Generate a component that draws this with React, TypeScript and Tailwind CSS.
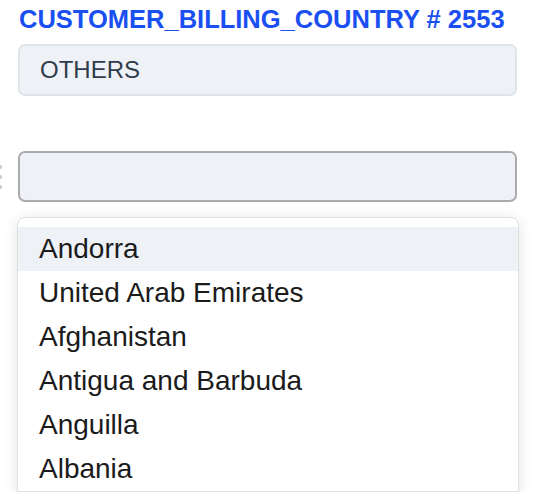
const countries = [
    "Andorra",
    "United Arab Emirates",
    "Afghanistan",
    "Antigua and Barbuda",
    "Anguilla",
    "Albania",
]

const DragHandle = () => (
    <div className="flex w-[20px] shrink-0 flex-col gap-[6px] -ml-[2px]">
        <span className="block h-[4px] w-[4px] rounded-full bg-[#c4c4c4]" />
        <span className="block h-[4px] w-[4px] rounded-full bg-[#c4c4c4]" />
        <span className="block h-[4px] w-[4px] rounded-full bg-[#c4c4c4]" />
    </div>
)

const App = () => {
    return (
        <div
            className="flex h-[492px] w-[540px] flex-col overflow-hidden bg-white pr-[23px] pt-[4px]"
            style={{ fontFamily: '"Liberation Sans", Arial, sans-serif' }}
        >
            <h2 className="ml-[19px] shrink-0 text-[25.5px] font-bold leading-[30px] text-[#1a4ff2]">
                CUSTOMER_BILLING_COUNTRY # 2553
            </h2>

            <div className="ml-[18px] mt-[10px] flex h-[52px] shrink-0 items-center rounded-[7px] border-2 border-[#dfe4eb] bg-[#eef2f7] pl-[20px] text-[24px] text-[#2f3c4a]">
                OTHERS
            </div>

            <div className="mt-[55px] flex shrink-0 items-center">
                <DragHandle />
                <input
                    aria-label="country"
                    className="h-[51px] flex-1 rounded-[7px] border-2 border-[#ababab] bg-[#eef2f7] px-[20px] text-[23px] outline-none"
                />
            </div>

            <div className="ml-[17px] -mr-[2px] mt-[15px] shrink-0 rounded-t-[8px] border border-[#e0e0e0] bg-white pt-[9px] shadow-[0_2px_14px_rgba(0,0,0,0.12)]">
                {countries.map((c, i) => (
                    <div
                        key={c}
                        className={
                            i === 0
                                ? "flex h-[44px] items-center bg-[#eef2f7] pl-[21px] text-[28px] text-[#1b1b1b]"
                                : "flex h-[44px] items-center pl-[21px] text-[28px] text-[#1b1b1b]"
                        }
                    >
                        {c}
                    </div>
                ))}
            </div>
        </div>
    )
}

export default App
